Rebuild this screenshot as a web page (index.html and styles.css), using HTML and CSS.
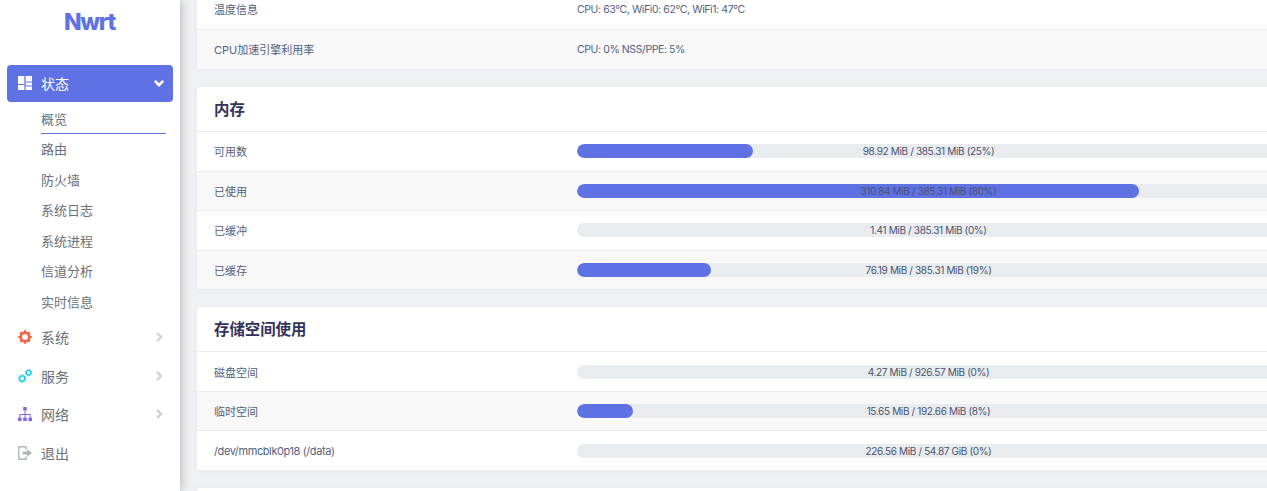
FILE: index.html
```html
<!DOCTYPE html>
<html lang="zh-CN">
<head>
<meta charset="utf-8">
<title>Nwrt - 概览</title>
<link rel="stylesheet" href="styles.css">
</head>
<body>
<div class="app">
  <aside class="sidebar">
    <div class="logo">Nwrt</div>
    <nav class="menu">
      <a class="item active">
        <svg class="icon" viewBox="0 0 14 14"><path fill="#fff" d="M0 0h6.4v8H0zM7.6 0H14v5.4H7.6zM0 9h6.4v5H0zM7.6 6.4H14v3.2H7.6zM7.6 10.6H14V14H7.6z"/></svg>
        <span class="item-label">状态</span>
        <svg class="chev" viewBox="0 0 10 10"><path d="M1.5 3.2 5 6.7l3.5-3.5" fill="none" stroke="#fff" stroke-width="2.2"/></svg>
      </a>
      <ul class="sub">
        <li class="current">概览</li>
        <li>路由</li>
        <li>防火墙</li>
        <li>系统日志</li>
        <li>系统进程</li>
        <li>信道分析</li>
        <li>实时信息</li>
      </ul>
      <a class="item">
        <svg class="icon" viewBox="0 0 14 14"><circle cx="7" cy="7" r="4.3" fill="none" stroke="#fb6340" stroke-width="2.7"/><path stroke="#fb6340" stroke-width="2.2" d="M7 .2V2M7 12v1.8M.2 7H2M12 7h1.8M2.2 2.2l1.3 1.3M10.5 10.5l1.3 1.3M11.8 2.2l-1.3 1.3M3.5 10.5l-1.3 1.3"/></svg>
        <span class="item-label">系统</span>
        <svg class="chev" viewBox="0 0 10 10"><path d="M3.3 1.5 6.8 5 3.3 8.5" fill="none" stroke="#ced4da" stroke-width="2"/></svg>
      </a>
      <a class="item">
        <svg class="icon" viewBox="0 0 14 14"><g fill="none" stroke="#11cdef"><circle cx="4.2" cy="9.6" r="2.7" stroke-width="1.4"/><circle cx="10.6" cy="3.6" r="2.3" stroke-width="1.3"/><circle cx="4.2" cy="9.6" r="3.9" stroke-width="1" stroke-dasharray="1.4 1.66"/><circle cx="10.6" cy="3.6" r="3.2" stroke-width="1" stroke-dasharray="1.2 1.31"/></g></svg>
        <span class="item-label">服务</span>
        <svg class="chev" viewBox="0 0 10 10"><path d="M3.3 1.5 6.8 5 3.3 8.5" fill="none" stroke="#ced4da" stroke-width="2"/></svg>
      </a>
      <a class="item">
        <svg class="icon" viewBox="0 0 14 14"><path fill="#8965e0" d="M5.2 0h3.6v3.6H5.2zM0 10.4h3.6V14H0zM5.2 10.4h3.6V14H5.2zM10.4 10.4H14V14h-3.6z"/><path fill="none" stroke="#8965e0" d="M7 3.6v6.8M1.8 10.4V7.5h10.4v2.9"/></svg>
        <span class="item-label">网络</span>
        <svg class="chev" viewBox="0 0 10 10"><path d="M3.3 1.5 6.8 5 3.3 8.5" fill="none" stroke="#ced4da" stroke-width="2"/></svg>
      </a>
      <a class="item">
        <svg class="icon" viewBox="0 0 14 14"><path fill="none" stroke="#adb5bd" stroke-width="1.4" d="M8 3.4V.8H.8v12.4H8v-2.6"/><path fill="#adb5bd" d="M4.5 5.6h4.7V3.2L14 7l-4.8 3.8V8.4H4.5z"/></svg>
        <span class="item-label">退出</span>
      </a>
    </nav>
  </aside>
  <main class="main">
    <section class="card">
      <div class="row row-cut"><div class="label">温度信息</div><div class="value value-text">CPU: 63°C, WiFi0: 62°C, WiFi1: 47°C</div></div>
      <div class="row"><div class="label">CPU加速引擎利用率</div><div class="value value-text">CPU: 0% NSS/PPE: 5%</div></div>
    </section>
    <section class="card">
      <h3 class="card-title">内存</h3>
      <div class="row"><div class="label">可用数</div><div class="value"><div class="bar"><div class="fill" style="width:25%"></div><span class="bar-text">98.92 MiB / 385.31 MiB (25%)</span></div></div></div>
      <div class="row"><div class="label">已使用</div><div class="value"><div class="bar"><div class="fill" style="width:80%"></div><span class="bar-text">310.84 MiB / 385.31 MiB (80%)</span></div></div></div>
      <div class="row"><div class="label">已缓冲</div><div class="value"><div class="bar"><div class="fill" style="width:0%"></div><span class="bar-text">1.41 MiB / 385.31 MiB (0%)</span></div></div></div>
      <div class="row"><div class="label">已缓存</div><div class="value"><div class="bar"><div class="fill" style="width:19%"></div><span class="bar-text">76.19 MiB / 385.31 MiB (19%)</span></div></div></div>
    </section>
    <section class="card">
      <h3 class="card-title">存储空间使用</h3>
      <div class="row"><div class="label">磁盘空间</div><div class="value"><div class="bar"><div class="fill" style="width:0%"></div><span class="bar-text">4.27 MiB / 926.57 MiB (0%)</span></div></div></div>
      <div class="row"><div class="label">临时空间</div><div class="value"><div class="bar"><div class="fill" style="width:8%"></div><span class="bar-text">15.65 MiB / 192.66 MiB (8%)</span></div></div></div>
      <div class="row"><div class="label label-latin">/dev/mmcblk0p18 (/data)</div><div class="value"><div class="bar"><div class="fill" style="width:0%"></div><span class="bar-text">226.56 MiB / 54.87 GiB (0%)</span></div></div></div>
    </section>
    <section class="card card-next"></section>
  </main>
</div>
</body>
</html>
```

FILE: styles.css
```css
* { box-sizing: border-box; }
html, body { margin: 0; height: 100%; overflow: hidden; }
body {
  font-family: Inter, "Noto Sans CJK SC", sans-serif;
  color: #32325d;
  background: #f0f1f4;
}
.app { display: flex; height: 491px; }
.sidebar {
  flex: 0 0 180px;
  background: #fff;
  box-shadow: 2px 0 8px rgba(60, 60, 80, .28);
  z-index: 1;
  padding: 0 7px;
}
.logo {
  height: 65px;
  padding: 8px 1px 0 0;
  text-align: center;
  font-size: 23px;
  line-height: 28px;
  font-weight: 800;
  letter-spacing: -1.4px;
  color: #5e72e4;
}
.menu { display: flex; flex-direction: column; }
.item {
  display: flex;
  align-items: center;
  height: 38.6px;
  padding: 0 8px 0 11px;
  border-radius: 4px;
  font-size: 14px;
  color: #6b6f76;
}
.item.active { height: 37px; background: #5e72e4; color: #fff; padding-bottom: 1px; }
.icon { width: 14px; height: 14px; flex: none; }
.item-label { flex: 1; margin-left: 9px; }
.chev { width: 12px; height: 12px; flex: none; }
.sub {
  list-style: none;
  margin: 0;
  padding: 2px 7px .7px 34px;
  font-size: 13px;
  color: #6b6f76;
}
.sub li { height: 30.5px; line-height: 31px; }
.sub li.current { height: 30px; line-height: 30px; border-bottom: 1px solid #5e72e4; }
.main {
  flex: 1;
  min-width: 0;
  overflow: hidden;
  padding-left: 17px;
  display: flex;
  flex-direction: column;
  gap: 18px;
}
.card {
  width: 1200px;
  flex: none;
  background: #fff;
  border-radius: 4px;
  box-shadow: 0 0 6px rgba(120, 125, 140, .08);
}
.card-title {
  margin: 0;
  height: 45px;
  padding: 0 17px;
  border-bottom: 1px solid #e9ecef;
  font-size: 15.4px;
  line-height: 45px;
  font-weight: 700;
  color: #32325d;
}
.row {
  display: flex;
  align-items: center;
  height: 39.6px;
  border-bottom: 1px solid #e9ecef;
  font-size: 11px;
  color: #525f7f;
}
.row:last-child { border-bottom: 0; height: 38.5px; }
.row:nth-child(even) { background: #f8f8f9; }
.card-title ~ .row:nth-child(even) { background: #fff; }
.card-title ~ .row:nth-child(odd) { background: #f8f8f9; }
.row-cut { height: 30px; background: #fff; padding-bottom: 11px; }
.row-cut + .row:last-child { height: 39px; padding-bottom: 1px; }
.label { flex: 0 0 380px; padding-left: 17px; }
.label-latin { letter-spacing: -.4px; }
.value { flex: 1; }
.value-text { font-size: 10.5px; letter-spacing: -.4px; }
.bar {
  position: relative;
  width: 703px;
  height: 14px;
  border-radius: 7px;
  overflow: hidden;
  background: #e9ecef;
}
.fill { height: 100%; background: #5e72e4; border-radius: 7px; }
.bar-text {
  position: absolute;
  inset: 0;
  text-align: center;
  font-size: 10px;
  letter-spacing: -.35px;
  line-height: 14px;
  color: #4a5070;
}
.card-next { height: 40px; }
```
